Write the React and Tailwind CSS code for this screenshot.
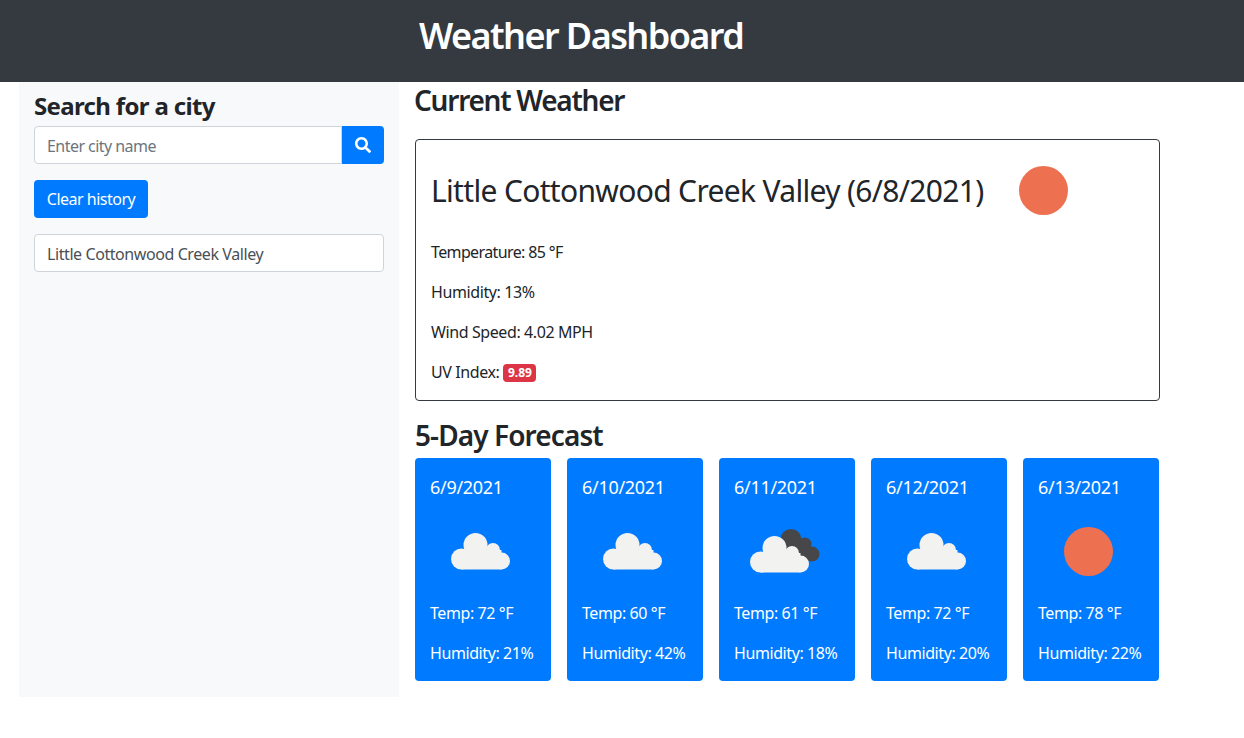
const font = { fontFamily: '"Noto Sans", sans-serif' };

function CloudShape({ y = 0 }) {
  return (
    <g transform={`translate(0 ${y})`} fill="#f2f2f0">
      <circle cx="10.500" cy="26" r="10.500" />
      <circle cx="24.500" cy="12" r="12" />
      <circle cx="42" cy="17" r="7" />
      <circle cx="50.500" cy="28" r="8.500" />
      <rect x="10.500" y="17" width="40" height="19.500" />
    </g>
  );
}

function Cloud({ className }) {
  return (
    <svg viewBox="0 0 59 37" className={className}>
      <CloudShape />
    </svg>
  );
}

function DarkCloud() {
  return (
    <svg viewBox="0 0 70 44" className="w-[70px] h-[44px]">
      <g fill="#474749">
        <circle cx="41" cy="10.500" r="10.500" />
        <circle cx="55" cy="15" r="6.500" />
        <circle cx="62" cy="25" r="7.500" />
        <path d="M38 8 L55 10 L62 32 L50 32z" />
      </g>
      <CloudShape y={7} />
    </svg>
  );
}

function Sun({ className }) {
  return <div className={"rounded-full bg-[#ed7050] " + className} />;
}

const days = [
  { d: "6/9/2021", t: 72, h: 21, i: "cloud" },
  { d: "6/10/2021", t: 60, h: 42, i: "cloud" },
  { d: "6/11/2021", t: 61, h: 18, i: "dark" },
  { d: "6/12/2021", t: 72, h: 20, i: "cloud" },
  { d: "6/13/2021", t: 78, h: 22, i: "sun" },
];

function Card({ d, t, h, i }) {
  return (
    <div className="w-[136px] h-[223px] bg-[#007bff] rounded text-white px-[15px] pt-[17px] text-[16px] leading-6 tracking-[-0.42px]">
      <div className="text-[18px] tracking-[-0.3px]">{d}</div>
      <div className="h-[102px] pr-[5px] flex items-center justify-center">
        {i === "cloud" && <Cloud className="w-[59px] h-[37px] mt-[3px]" />}
        {i === "dark" && <div className="ml-[1px] mt-[2px]"><DarkCloud /></div>}
        {i === "sun" && <Sun className="w-[49px] h-[49px] mt-[3px]" />}
      </div>
      <div className="mb-4">Temp: {t} °F</div>
      <div>Humidity: {h}%</div>
    </div>
  );
}

export default function App() {
  return (
    <div style={font} className="bg-white text-[#212529] min-h-[738px]">
      <header className="h-[82px] bg-[#343a40] text-white flex items-start pt-[18px] pl-[419px]">
        <h1 className="text-[36px] font-semibold leading-none tracking-[-1.56px] whitespace-nowrap">Weather Dashboard</h1>
      </header>
      <div className="flex">
        <aside className="ml-[19px] w-[380px] h-[615px] bg-[#f8f9fa] px-[15px] pt-[8px]">
          <h3 className="text-[24px] font-bold leading-[32px] mb-[4px] tracking-[-0.65px]">Search for a city</h3>
          <div className="flex h-[38px]">
            <div className="flex-1 bg-white border border-[#ced4da] rounded-l px-3 pt-[1px] flex items-center text-[#6c757d] text-[16px] tracking-[-0.55px]">
              Enter city name
            </div>
            <div className="w-[42px] bg-[#007bff] rounded-r flex items-center justify-center">
              <svg viewBox="0 0 512 512" className="w-4 h-4" fill="#fff">
                <path d="M505 442.700L405.300 343c-4.500-4.500-10.600-7-17-7H372c27.600-35.300 44-79.700 44-128C416 93.100 322.900 0 208 0S0 93.100 0 208s93.100 208 208 208c48.300 0 92.700-16.400 128-44v16.300c0 6.400 2.500 12.500 7 17l99.700 99.700c9.400 9.400 24.600 9.400 33.900 0l28.300-28.300c9.400-9.400 9.400-24.600.1-34zM208 336c-70.700 0-128-57.200-128-128 0-70.700 57.200-128 128-128 70.700 0 128 57.200 128 128 0 70.700-57.200 128-128 128z" />
              </svg>
            </div>
          </div>
          <div className="mt-4 w-[114px] h-[38px] bg-[#007bff] text-white rounded flex items-center justify-center text-[16px] tracking-[-0.5px]">
            Clear history
          </div>
          <div className="mt-4 h-[38px] bg-white border border-[#ced4da] rounded px-3 pt-[1px] flex items-center text-[#495057] text-[16px] tracking-[-0.42px]">
            Little Cottonwood Creek Valley
          </div>
        </aside>
        <main className="ml-[15px] w-[746px]">
          <h3 className="text-[28px] font-semibold leading-[36px] tracking-[-1.25px]">Current Weather</h3>
          <section className="ml-[1px] mt-[21px] h-[262px] w-[745px] border border-[#343a40] rounded px-[15px] pt-[25px]">
            <div className="flex items-center h-[50px]">
              <h2 className="text-[30px] font-normal leading-none w-[588px] mt-[2px] tracking-[-0.67px] whitespace-nowrap">
                Little Cottonwood Creek Valley (6/8/2021)
              </h2>
              <Sun className="w-[49px] h-[49px]" />
            </div>
            <div className="mt-[25px] text-[16px] leading-6 tracking-[-0.4px] flex flex-col gap-4">
              <div className="tracking-[-0.62px]">Temperature: 85 °F</div>
              <div>Humidity: 13%</div>
              <div>Wind Speed: 4.02 MPH</div>
              <div className="flex items-center">
                UV Index:
                <span className="ml-1 mt-[2px] bg-[#dc3545] text-white text-[12px] font-bold rounded px-[4.500px] h-[18px] leading-[18px] tracking-normal">9.89</span>
              </div>
            </div>
          </section>
          <h3 className="ml-[1px] mt-[16px] text-[28px] font-semibold leading-[36px] tracking-[-0.9px]">5-Day Forecast</h3>
          <div className="ml-[1px] mt-[5px] flex gap-4">
            {days.map((x) => <Card key={x.d} {...x} />)}
          </div>
        </main>
      </div>
    </div>
  );
}
